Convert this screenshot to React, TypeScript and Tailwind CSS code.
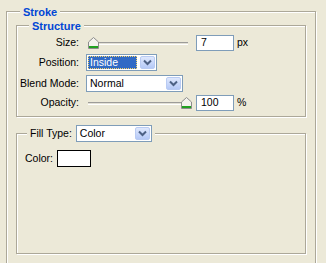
function Chevron() {
  return (
    <svg width="9" height="7" viewBox="0 0 9 7">
      <path d="M1 1.5 L4.5 5 L8 1.5" fill="none" stroke="#4d6185" strokeWidth="2" />
    </svg>
  );
}

function Select({ value, width, focused }: { value: string; width: string; focused?: boolean }) {
  return (
    <div className={`flex h-[17px] items-stretch border border-[#7f9db9] bg-white p-px ${width}`}>
      <div className="flex flex-1 items-center overflow-hidden">
        {focused ? (
          <span className="flex h-full w-full items-center border border-dotted border-[#f5d36b] bg-[#316ac5] pl-px text-white">
            {value}
          </span>
        ) : (
          <span className="pl-[2px]">{value}</span>
        )}
      </div>
      <div className="ml-[3px] flex w-[15px] items-center justify-center rounded-[2px] border border-[#b9cbf3] bg-gradient-to-b from-[#dfe8fd] to-[#b5c9f7]">
        <Chevron />
      </div>
    </div>
  );
}

function Thumb() {
  return (
    <svg width="11" height="12" viewBox="0 0 11 12" className="shrink-0">
      <path d="M5.5 0.5 L10.5 5 L10.5 11.5 L0.5 11.5 L0.5 5 Z" fill="#f4f3ee" stroke="#8c8c8c" />
      <rect x="1" y="9" width="9" height="2" fill="#21a121" />
    </svg>
  );
}

function Slider({ pos }: { pos: "start" | "end" }) {
  return (
    <div className="relative h-[14px] w-[106px]">
      <div className="absolute top-[6px] left-[2px] right-[4px] h-[3px] border-t border-[#9d9c99] border-b border-b-white bg-[#e3e1d6]" />
      <div className={`absolute top-[1px] ${pos === "start" ? "left-[2px]" : "left-[95px]"}`}>
        <Thumb />
      </div>
    </div>
  );
}

function Field({ value }: { value: string }) {
  return (
    <div className="flex h-[16px] w-[38px] items-center border border-[#7f9db9] bg-white pl-[4px]">{value}</div>
  );
}

function Row({ label, children }: { label: string; children: React.ReactNode }) {
  return (
    <div className="flex items-center">
      <div className="w-[63px] pr-px text-right">{label}</div>
      <div className="ml-[6px] flex items-center">{children}</div>
    </div>
  );
}

const etched = "border border-[#aca899] shadow-[1px_1px_0_#ffffff,inset_1px_1px_0_#ffffff]";

export default function App() {
  return (
    <div
      className="h-screen overflow-hidden bg-[#ece9d8] text-[10.5px] text-black"
      style={{ fontFamily: '"Liberation Sans", Arial, sans-serif' }}
    >
      <div className={`relative ml-[6px] mt-[11px] h-[270px] w-[310px] ${etched}`}>
        <div className="absolute -top-[8px] left-[13px] bg-[#ece9d8] px-[3px] text-[11px] font-bold text-[#0046d5]">
          Stroke
        </div>

        <div className={`relative ml-[9px] mt-[13px] h-[92px] w-[290px] ${etched}`}>
          <div className="absolute -top-[8px] left-[12px] bg-[#ece9d8] px-[3px] text-[11px] font-bold text-[#0046d5]">
            Structure
          </div>
          <div className="flex flex-col gap-[3px] pt-[9px]">
            <Row label="Size:">
              <Slider pos="start" />
              <div className="ml-[4px]">
                <Field value="7" />
              </div>
              <span className="ml-[3px]">px</span>
            </Row>
            <Row label="Position:">
              <Select value="Inside" width="w-[71px]" focused />
            </Row>
            <div className="mt-[1px]">
              <Row label="Blend Mode:">
                <Select value="Normal" width="w-[97px]" />
              </Row>
            </div>
            <Row label="Opacity:">
              <Slider pos="end" />
              <div className="ml-[4px]">
                <Field value="100" />
              </div>
              <span className="ml-[3px]">%</span>
            </Row>
          </div>
        </div>

        <div className={`relative ml-[9px] mt-[16px] h-[121px] w-[290px] ${etched}`}>
          <div className="absolute -top-[9px] left-[10px] flex items-center bg-[#ece9d8] px-[3px]">
            <span className="mr-[4px]">Fill Type:</span>
            <Select value="Color" width="w-[76px]" />
          </div>
          <div className="flex items-center pl-[8px] pt-[16px]">
            <span>Color:</span>
            <div className="ml-[4px] h-[17px] w-[34px] border border-black bg-white" />
          </div>
        </div>
      </div>
    </div>
  );
}
